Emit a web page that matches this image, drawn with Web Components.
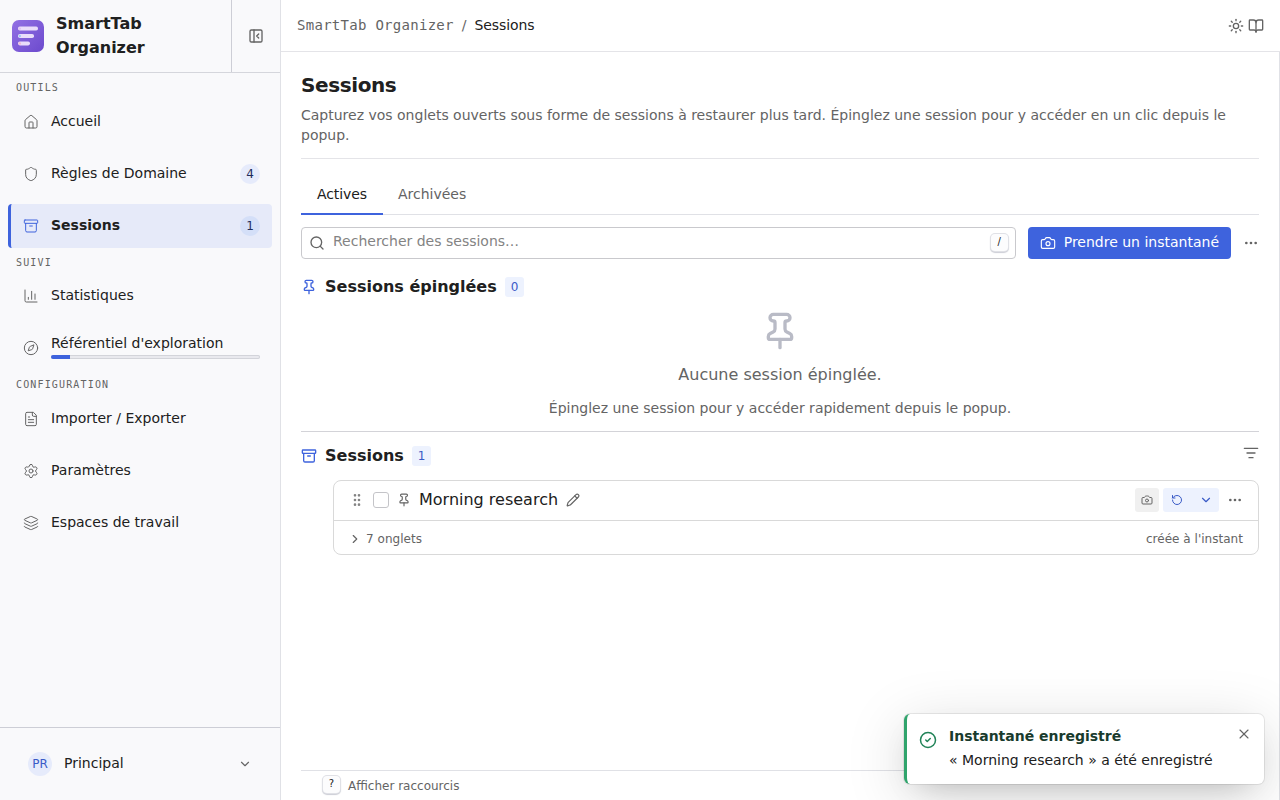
<!DOCTYPE html>
<html lang="fr">
<head>
<meta charset="utf-8">
<title>SmartTab Organizer</title>
<style>
    body {
        margin: 0;
        font-family: "DejaVu Sans", sans-serif;
        font-size: 14px;
        line-height: 20px;
        color: #202020;
        background: #fff;
        overflow: hidden;
        --accent: #3e63dd;
        --accent-soft: #edf2fe;
        --gray: #646464;
        --line: #d9d9d9;
        --mono: "DejaVu Sans Mono", monospace;
    }
</style>
</head>
<body>
<st-app></st-app>

<script>
const ICONS = {
    panel: '<rect width="18" height="18" x="3" y="3" rx="2"/><path d="M9 3v18"/><path d="m16 15-3-3 3-3"/>',
    home: '<path d="M15 21v-8a1 1 0 0 0-1-1h-4a1 1 0 0 0-1 1v8"/><path d="M3 10a2 2 0 0 1 .709-1.528l7-6a2 2 0 0 1 2.582 0l7 6A2 2 0 0 1 21 10v9a2 2 0 0 1-2 2H5a2 2 0 0 1-2-2z"/>',
    shield: '<path d="M20 13c0 5-3.5 7.5-7.66 8.95a1 1 0 0 1-.67-.01C7.5 20.5 4 18 4 13V6a1 1 0 0 1 1-1c2 0 4.5-1.2 6.24-2.72a1.17 1.17 0 0 1 1.52 0C14.51 3.81 17 5 19 5a1 1 0 0 1 1 1z"/>',
    archive: '<rect width="20" height="5" x="2" y="3" rx="1"/><path d="M4 8v11a2 2 0 0 0 2 2h12a2 2 0 0 0 2-2V8"/><path d="M10 12h4"/>',
    chart: '<path d="M3 3v16a2 2 0 0 0 2 2h16"/><path d="M18 17V9"/><path d="M13 17V5"/><path d="M8 17v-3"/>',
    compass: '<path d="m16.24 7.76-1.804 5.411a2 2 0 0 1-1.265 1.265L7.76 16.24l1.804-5.411a2 2 0 0 1 1.265-1.265z"/><circle cx="12" cy="12" r="10"/>',
    file: '<path d="M15 2H6a2 2 0 0 0-2 2v16a2 2 0 0 0 2 2h12a2 2 0 0 0 2-2V7Z"/><path d="M14 2v4a2 2 0 0 0 2 2h4"/><path d="M10 9H8"/><path d="M16 13H8"/><path d="M16 17H8"/>',
    settings: '<path d="M9.671 4.136a2.34 2.34 0 0 1 4.659 0 2.34 2.34 0 0 0 3.319 1.915 2.34 2.34 0 0 1 2.33 4.033 2.34 2.34 0 0 0 0 3.831 2.34 2.34 0 0 1-2.33 4.033 2.34 2.34 0 0 0-3.319 1.915 2.34 2.34 0 0 1-4.659 0 2.34 2.34 0 0 0-3.32-1.915 2.34 2.34 0 0 1-2.33-4.033 2.34 2.34 0 0 0 0-3.831A2.34 2.34 0 0 1 6.35 6.051a2.34 2.34 0 0 0 3.319-1.915"/><circle cx="12" cy="12" r="3"/>',
    layers: '<path d="M12.83 2.18a2 2 0 0 0-1.66 0L2.6 6.08a1 1 0 0 0 0 1.83l8.58 3.91a2 2 0 0 0 1.66 0l8.58-3.9a1 1 0 0 0 0-1.83z"/><path d="M2 12a1 1 0 0 0 .58.91l8.6 3.91a2 2 0 0 0 1.65 0l8.58-3.9A1 1 0 0 0 22 12"/><path d="M2 17a1 1 0 0 0 .58.91l8.6 3.91a2 2 0 0 0 1.65 0l8.58-3.9A1 1 0 0 0 22 17"/>',
    down: '<path d="m6 9 6 6 6-6"/>',
    right: '<path d="m9 18 6-6-6-6"/>',
    sun: '<circle cx="12" cy="12" r="4"/><path d="M12 2v2"/><path d="M12 20v2"/><path d="m4.93 4.93 1.41 1.41"/><path d="m17.66 17.66 1.41 1.41"/><path d="M2 12h2"/><path d="M20 12h2"/><path d="m6.34 17.66-1.41 1.41"/><path d="m19.07 4.93-1.41 1.41"/>',
    book: '<path d="M12 7v14"/><path d="M3 18a1 1 0 0 1-1-1V4a1 1 0 0 1 1-1h5a4 4 0 0 1 4 4 4 4 0 0 1 4-4h5a1 1 0 0 1 1 1v13a1 1 0 0 1-1 1h-6a3 3 0 0 0-3 3 3 3 0 0 0-3-3z"/>',
    search: '<path d="m21 21-4.34-4.34"/><circle cx="11" cy="11" r="8"/>',
    camera: '<path d="M13.997 4a2 2 0 0 1 1.76 1.05l.486.9A2 2 0 0 0 18.003 7H20a2 2 0 0 1 2 2v9a2 2 0 0 1-2 2H4a2 2 0 0 1-2-2V9a2 2 0 0 1 2-2h1.997a2 2 0 0 0 1.759-1.048l.489-.904A2 2 0 0 1 10.004 4z"/><circle cx="12" cy="13" r="3"/>',
    dots: '<circle cx="12" cy="12" r="1"/><circle cx="19" cy="12" r="1"/><circle cx="5" cy="12" r="1"/>',
    pin: '<path d="M12 17v5"/><path d="M9 10.76a2 2 0 0 1-1.11 1.79l-1.78.9A2 2 0 0 0 5 15.24V16a1 1 0 0 0 1 1h12a1 1 0 0 0 1-1v-.76a2 2 0 0 0-1.11-1.79l-1.78-.9A2 2 0 0 1 15 10.76V7a1 1 0 0 1 1-1 2 2 0 0 0 0-4H8a2 2 0 0 0 0 4 1 1 0 0 1 1 1z"/>',
    filter: '<path d="M2 5h20"/><path d="M6 12h12"/><path d="M9 19h6"/>',
    grip: '<circle cx="9" cy="12" r="1"/><circle cx="9" cy="5" r="1"/><circle cx="9" cy="19" r="1"/><circle cx="15" cy="12" r="1"/><circle cx="15" cy="5" r="1"/><circle cx="15" cy="19" r="1"/>',
    pencil: '<path d="M21.174 6.812a1 1 0 0 0-3.986-3.987L3.842 16.174a2 2 0 0 0-.5.83l-1.321 4.352a.5.5 0 0 0 .623.622l4.353-1.32a2 2 0 0 0 .83-.497z"/><path d="m15 5 4 4"/>',
    restore: '<path d="M3 12a9 9 0 1 0 9-9 9.75 9.75 0 0 0-6.74 2.74L3 8"/><path d="M3 3v5h5"/>',
    check: '<circle cx="12" cy="12" r="10"/><path d="m9 12 2 2 4-4"/>',
    close: '<path d="M18 6 6 18"/><path d="m6 6 12 12"/>'
};

class StIcon extends HTMLElement {
    connectedCallback() {
        const size = this.getAttribute('size') || 16;
        const stroke = this.getAttribute('stroke') || 2;
        this.attachShadow({ mode: 'open' });
        this.shadowRoot.innerHTML = `
            <style>
                :host { display: block; flex: none; width: ${size}px; height: ${size}px; }
                svg { display: block; }
            </style>
            <svg width="${size}" height="${size}" viewBox="0 0 24 24" fill="none" stroke="currentColor"
                stroke-width="${stroke}" stroke-linecap="round" stroke-linejoin="round">${ICONS[this.getAttribute('name')]}</svg>
        `;
    }
}

class StLogo extends HTMLElement {
    connectedCallback() {
        this.attachShadow({ mode: 'open' });
        this.shadowRoot.innerHTML = `
            <style>
                :host { display: block; flex: none; width: 32px; height: 32px; }
                svg { display: block; }
            </style>
            <svg width="32" height="32" viewBox="0 0 32 32">
                <defs>
                    <linearGradient id="bg" x1="0" y1="0" x2="1" y2="1">
                        <stop offset="0" stop-color="#9270e4"/>
                        <stop offset="1" stop-color="#6c4acd"/>
                    </linearGradient>
                </defs>
                <rect width="32" height="32" rx="7" fill="url(#bg)"/>
                <g fill="#e9dcfa">
                    <rect x="6" y="6.6" width="20" height="4" rx="1.8"/>
                    <rect x="6" y="14" width="16" height="4" rx="1.8"/>
                    <rect x="6" y="21.4" width="12" height="4" rx="1.8"/>
                </g>
                <circle cx="7.8" cy="8.6" r="1.2" fill="#dfc0f3"/>
                <circle cx="7.8" cy="16" r="1.2" fill="#9cc8f5"/>
                <circle cx="7.8" cy="23.4" r="1.2" fill="#f2b8d2"/>
            </svg>
        `;
    }
}

class StNavItem extends HTMLElement {
    connectedCallback() {
        const badge = this.getAttribute('badge');
        this.attachShadow({ mode: 'open' });
        this.shadowRoot.innerHTML = `
            <style>
                :host {
                    display: flex;
                    align-items: center;
                    gap: 12px;
                    box-sizing: border-box;
                    height: 44px;
                    padding: 0 12px;
                    border-left: 3px solid transparent;
                    border-radius: 4px;
                }
                :host([active]) {
                    background: #e6eaf9;
                    border-left-color: var(--accent);
                    font-weight: 700;
                }
                st-icon { color: var(--gray); }
                :host([active]) st-icon { color: var(--accent); }
                .label { flex: 1; padding-bottom: 2px; }
                :host([progress]) .label { padding-bottom: 4px; }
                .badge {
                    width: 20px;
                    height: 20px;
                    border-radius: 50%;
                    background: #e6ebfb;
                    color: #1f2d5c;
                    font-size: 12px;
                    font-weight: 400;
                    text-align: center;
                }
                :host([active]) .badge { background: #d4dff8; }
                .bar {
                    box-sizing: border-box;
                    height: 4px;
                    margin-top: 2px;
                    border-radius: 2px;
                    background: #e9e9ee;
                    box-shadow: inset 0 0 0 1px #d3d4da;
                    overflow: hidden;
                }
                .bar i { display: block; width: 9%; height: 100%; background: var(--accent); }
            </style>
            <st-icon name="${this.getAttribute('icon')}" stroke="1.5"></st-icon>
            <div class="label"><slot></slot>${this.hasAttribute('progress') ? '<div class="bar"><i></i></div>' : ''}</div>
            ${badge ? `<span class="badge">${badge}</span>` : ''}
        `;
    }
}

class StSidebar extends HTMLElement {
    connectedCallback() {
        this.attachShadow({ mode: 'open' });
        this.shadowRoot.innerHTML = `
            <style>
                :host {
                    display: flex;
                    flex-direction: column;
                    width: 280px;
                    background: #f9f9fb;
                    border-right: 1px solid #e0e1e6;
                }
                header { display: flex; height: 72px; border-bottom: 1px solid #d5d6dc; }
                .brand {
                    flex: 1;
                    display: flex;
                    align-items: center;
                    gap: 12px;
                    padding-left: 12px;
                    font-size: 16px;
                    font-weight: 700;
                    line-height: 24px;
                }
                .toggle {
                    width: 48px;
                    border-left: 1px solid #cdced6;
                    display: grid;
                    place-items: center;
                    color: var(--gray);
                }
                nav { flex: 1; padding: 0 8px; }
                h2 {
                    margin: 0;
                    padding: 5px 8px 0;
                    height: 22px;
                    font: 400 10px/20px var(--mono);
                    letter-spacing: 1.15px;
                    color: var(--gray);
                }
                h2.suivi { height: 21px; }
                st-nav-item + st-nav-item { margin-top: 8px; }
                footer {
                    display: flex;
                    align-items: center;
                    height: 72px;
                    padding: 0 28px;
                    border-top: 1px solid #cdced6;
                }
                .avatar {
                    width: 24px;
                    height: 24px;
                    margin-right: 12px;
                    border-radius: 50%;
                    background: #e6ebfb;
                    color: #3a5bc7;
                    font-size: 12px;
                    line-height: 24px;
                    text-align: center;
                }
                .name { flex: 1; padding-bottom: 2px; }
                footer st-icon { color: var(--gray); }
            </style>
            <header>
                <div class="brand"><st-logo></st-logo><span>SmartTab<br>Organizer</span></div>
                <div class="toggle"><st-icon name="panel"></st-icon></div>
            </header>
            <nav>
                <h2>OUTILS</h2>
                <st-nav-item icon="home">Accueil</st-nav-item>
                <st-nav-item icon="shield" badge="4">Règles de Domaine</st-nav-item>
                <st-nav-item icon="archive" badge="1" active>Sessions</st-nav-item>
                <h2 class="suivi">SUIVI</h2>
                <st-nav-item icon="chart">Statistiques</st-nav-item>
                <st-nav-item icon="compass" progress>Référentiel d'exploration</st-nav-item>
                <h2>CONFIGURATION</h2>
                <st-nav-item icon="file">Importer / Exporter</st-nav-item>
                <st-nav-item icon="settings">Paramètres</st-nav-item>
                <st-nav-item icon="layers">Espaces de travail</st-nav-item>
            </nav>
            <footer>
                <span class="avatar">PR</span>
                <span class="name">Principal</span>
                <st-icon name="down" size="14"></st-icon>
            </footer>
        `;
    }
}

class StTopbar extends HTMLElement {
    connectedCallback() {
        this.attachShadow({ mode: 'open' });
        this.shadowRoot.innerHTML = `
            <style>
                :host {
                    display: flex;
                    align-items: center;
                    flex: none;
                    height: 51px;
                    padding: 0 16px;
                    border-bottom: 1px solid #e4e4e8;
                    color: var(--gray);
                }
                .root, .sep, .page { padding-bottom: 2px; }
                .root { font-family: var(--mono); letter-spacing: 0.02em; }
                .sep { margin: 0 8px; }
                .page { flex: 1; color: #202020; letter-spacing: -0.1px; }
                .actions { display: flex; gap: 4px; }
            </style>
            <span class="root">SmartTab Organizer</span>
            <span class="sep">/</span>
            <span class="page">Sessions</span>
            <div class="actions">
                <st-icon name="sun"></st-icon>
                <st-icon name="book"></st-icon>
            </div>
        `;
    }
}

class StKbd extends HTMLElement {
    connectedCallback() {
        this.attachShadow({ mode: 'open' });
        this.shadowRoot.innerHTML = `
            <style>
                :host {
                    display: block;
                    flex: none;
                    width: 17px;
                    height: 17px;
                    margin-bottom: 2px;
                    border-radius: 4px;
                    background: #fcfcfd;
                    box-shadow: 0 0 0 1px #e0e1e6, 0 1px 1px 1px #cdced6;
                    font-size: 10px;
                    line-height: 15px;
                    text-align: center;
                    color: #202020;
                }
            </style>
            <slot></slot>
        `;
    }
}

class StSectionTitle extends HTMLElement {
    connectedCallback() {
        this.attachShadow({ mode: 'open' });
        this.shadowRoot.innerHTML = `
            <style>
                :host { display: flex; align-items: center; gap: 8px; height: 24px; }
                st-icon { color: var(--accent); }
                h2 { margin: 0; font-size: 16px; line-height: 24px; padding-bottom: 1px; }
                .count {
                    padding: 2px 6px;
                    border-radius: 3px;
                    background: var(--accent-soft);
                    color: #3a5bc7;
                    font-size: 12px;
                    line-height: 16px;
                }
                .extra { margin-left: auto; }
            </style>
            <st-icon name="${this.getAttribute('icon')}"></st-icon>
            <h2><slot></slot></h2>
            <span class="count">${this.getAttribute('count')}</span>
            <div class="extra"><slot name="extra"></slot></div>
        `;
    }
}

class StSessionCard extends HTMLElement {
    connectedCallback() {
        this.attachShadow({ mode: 'open' });
        this.shadowRoot.innerHTML = `
            <style>
                :host {
                    display: block;
                    border: 1px solid var(--line);
                    border-radius: 8px;
                    color: var(--gray);
                }
                .head {
                    display: flex;
                    align-items: center;
                    box-sizing: border-box;
                    height: 40px;
                    padding: 0 15px 2px;
                    border-bottom: 1px solid var(--line);
                }
                .grip { color: #838383; }
                .box {
                    box-sizing: border-box;
                    width: 16px;
                    height: 16px;
                    margin: 0 8px;
                    border: 1px solid #c4c4c8;
                    border-radius: 3px;
                }
                .title { margin: 0 8px; font-size: 16px; line-height: 24px; color: #202020; }
                .spacer { flex: 1; }
                .btn { display: grid; place-items: center; height: 24px; }
                .snap { width: 24px; background: #f0f0f0; border-radius: 3px; margin-right: 4px; }
                .split { display: flex; margin-right: 8px; border-radius: 3px; background: var(--accent-soft); color: #3a5bc7; }
                .split .btn { width: 28px; }
                .split .more { box-sizing: border-box; padding-left: 2px; }
                .foot {
                    display: flex;
                    align-items: center;
                    box-sizing: border-box;
                    height: 33px;
                    padding: 2px 15px 0 14px;
                    font-size: 12px;
                    line-height: 16px;
                    letter-spacing: 0.0025em;
                }
                .foot st-icon { margin-right: 4px; }
            </style>
            <div class="head">
                <st-icon class="grip" name="grip"></st-icon>
                <span class="box"></span>
                <st-icon name="pin" size="14"></st-icon>
                <span class="title"><slot></slot></span>
                <st-icon name="pencil" size="14"></st-icon>
                <span class="spacer"></span>
                <span class="btn snap"><st-icon name="camera" size="12"></st-icon></span>
                <span class="split">
                    <span class="btn"><st-icon name="restore" size="12"></st-icon></span>
                    <span class="btn more"><st-icon name="down" size="14"></st-icon></span>
                </span>
                <st-icon name="dots"></st-icon>
            </div>
            <div class="foot">
                <st-icon name="right" size="14"></st-icon>
                <slot name="tabs"></slot>
                <span class="spacer"></span>
                <slot name="date"></slot>
            </div>
        `;
    }
}

class StSessionsPage extends HTMLElement {
    connectedCallback() {
        this.attachShadow({ mode: 'open' });
        this.shadowRoot.innerHTML = `
            <style>
                :host {
                    flex: 1;
                    display: flex;
                    flex-direction: column;
                    padding: 19px 20px 0;
                    border-right: 1px solid #e0e1e6;
                }
                h1 { margin: 0; font-size: 20px; line-height: 28px; letter-spacing: -0.02em; }
                .intro { margin: 6px 0 0; padding-bottom: 13px; color: var(--gray); border-bottom: 1px solid #e4e4e8; }
                .tabs { display: flex; height: 41px; margin-top: 15px; box-shadow: inset 0 -1px #e0e1e6; color: var(--gray); }
                .tab { padding: 0 15px; line-height: 40px; }
                .tab.active { padding: 0 16px; letter-spacing: -0.1px; color: #202020; box-shadow: inset 0 -2px var(--accent); }
                .toolbar { display: flex; align-items: center; margin: 12px 0 16px; }
                .search {
                    flex: 1;
                    display: flex;
                    align-items: center;
                    box-sizing: border-box;
                    height: 32px;
                    padding: 0 7px;
                    border: 1px solid #c9c9cd;
                    border-radius: 4px;
                    color: var(--gray);
                }
                .search span { flex: 1; margin-left: 8px; padding-bottom: 4px; color: #838383; }
                .primary {
                    display: flex;
                    align-items: center;
                    gap: 8px;
                    height: 32px;
                    margin: 0 12px;
                    padding: 0 12px;
                    border-radius: 4px;
                    background: var(--accent);
                    color: #fff;
                }
                .primary span { padding-bottom: 2px; }
                .dots { color: var(--gray); }
                .empty {
                    display: flex;
                    flex-direction: column;
                    align-items: center;
                    padding: 12px 0 13px;
                    border-bottom: 1px solid #d3d3d8;
                    color: var(--gray);
                }
                .empty st-icon { color: #b9bbc6; }
                .empty strong { margin-top: 12px; font-size: 16px; font-weight: 400; line-height: 24px; }
                .empty span { margin-top: 11px; }
                .second { margin-top: 12px; }
                .filter { color: var(--gray); padding-bottom: 6px; }
                st-session-card { margin: 12px 0 0 32px; }
                footer {
                    display: flex;
                    align-items: center;
                    gap: 8px;
                    height: 29px;
                    margin-top: auto;
                    padding-left: 22px;
                    border-top: 1px solid #e0e1e6;
                    color: var(--gray);
                    font-size: 12px;
                }
            </style>
            <h1>Sessions</h1>
            <p class="intro">Capturez vos onglets ouverts sous forme de sessions à restaurer plus tard. Épinglez une session pour y accéder en un clic depuis le popup.</p>
            <div class="tabs">
                <span class="tab active">Actives</span>
                <span class="tab">Archivées</span>
            </div>
            <div class="toolbar">
                <div class="search">
                    <st-icon name="search"></st-icon>
                    <span>Rechercher des sessions…</span>
                    <st-kbd>/</st-kbd>
                </div>
                <div class="primary"><st-icon name="camera" stroke="1.7"></st-icon><span>Prendre un instantané</span></div>
                <st-icon class="dots" name="dots"></st-icon>
            </div>
            <st-section-title icon="pin" count="0">Sessions épinglées</st-section-title>
            <div class="empty">
                <st-icon name="pin" size="40"></st-icon>
                <strong>Aucune session épinglée.</strong>
                <span>Épinglez une session pour y accéder rapidement depuis le popup.</span>
            </div>
            <st-section-title class="second" icon="archive" count="1">Sessions<st-icon slot="extra" class="filter" name="filter"></st-icon></st-section-title>
            <st-session-card>
                Morning research
                <span slot="tabs">7 onglets</span>
                <span slot="date">créée à l'instant</span>
            </st-session-card>
            <footer><st-kbd>?</st-kbd>Afficher raccourcis</footer>
        `;
    }
}

class StToast extends HTMLElement {
    connectedCallback() {
        this.attachShadow({ mode: 'open' });
        this.shadowRoot.innerHTML = `
            <style>
                :host {
                    position: absolute;
                    right: 16px;
                    bottom: 16px;
                    box-sizing: border-box;
                    display: flex;
                    align-items: flex-start;
                    gap: 12px;
                    width: 360px;
                    height: 70px;
                    padding: 12px;
                    border-left: 3px solid #30a46c;
                    border-radius: 6px;
                    background: #fff;
                    box-shadow: 0 0 0 1px rgba(0, 0, 0, 0.08), 0 12px 60px rgba(0, 0, 0, 0.15), 0 12px 32px -16px rgba(0, 0, 0, 0.25);
                }
                .ok { margin-top: 5px; color: #218358; }
                .text { flex: 1; display: flex; flex-direction: column; gap: 4px; }
                strong { color: #193b2d; }
                .close { color: var(--gray); }
            </style>
            <st-icon class="ok" name="check" size="18"></st-icon>
            <div class="text"><strong><slot name="title"></slot></strong><slot></slot></div>
            <st-icon class="close" name="close" stroke="1.6"></st-icon>
        `;
    }
}

class StApp extends HTMLElement {
    connectedCallback() {
        this.attachShadow({ mode: 'open' });
        this.shadowRoot.innerHTML = `
            <style>
                :host { display: flex; height: 800px; position: relative; }
                main { flex: 1; min-width: 0; display: flex; flex-direction: column; }
            </style>
            <st-sidebar></st-sidebar>
            <main>
                <st-topbar></st-topbar>
                <st-sessions-page></st-sessions-page>
            </main>
            <st-toast>
                <span slot="title">Instantané enregistré</span>
                <span>« Morning research » a été enregistré</span>
            </st-toast>
        `;
    }
}

customElements.define('st-icon', StIcon);
customElements.define('st-logo', StLogo);
customElements.define('st-nav-item', StNavItem);
customElements.define('st-sidebar', StSidebar);
customElements.define('st-topbar', StTopbar);
customElements.define('st-kbd', StKbd);
customElements.define('st-section-title', StSectionTitle);
customElements.define('st-session-card', StSessionCard);
customElements.define('st-sessions-page', StSessionsPage);
customElements.define('st-toast', StToast);
customElements.define('st-app', StApp);
</script>
</body>
</html>
